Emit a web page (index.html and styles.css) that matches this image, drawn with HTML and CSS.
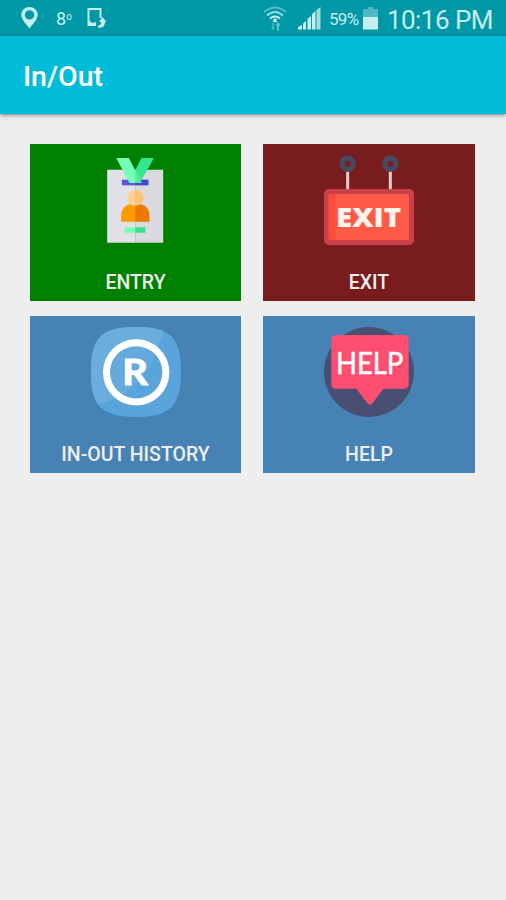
FILE: index.html
```html
<!DOCTYPE html>
<html lang="en">
<head>
<meta charset="utf-8">
<title>In/Out</title>
<link rel="stylesheet" href="styles.css">
</head>
<body>
<header class="status">
  <svg class="pin" viewBox="0 0 17 22"><path fill-rule="evenodd" d="M8.500 0C3.800 0 .3 3.400.3 7.800c0 4.800 4.800 9.200 8.200 13.700 3.400-4.500 8.200-8.900 8.200-13.700C16.700 3.400 13.200 0 8.500 0Zm0 3.200a4.700 4.700 0 1 1 0 9.400 4.700 4.700 0 0 1 0-9.400Z"/></svg>
  <span class="temp">8<span class="degree">o</span></span>
  <svg class="phone" viewBox="0 0 20 22"><path class="line" d="M13.500 11V2H1.500V18H9"/><path d="M1 14h2l2 2 4-1v2H6l3 2H1zM15.500 10l4 5H18c0 4-2.500 6.200-7 5.800v-2.300c2.500 0 3.200-1.500 3.200-3.500H12z"/></svg>
  <span class="spacer"></span>
  <svg class="wifi" viewBox="0 0 24 26"><g class="line"><path opacity=".45" d="M1 7q11-9 22 0"/><path opacity=".8" d="M4 10.500q8-7 16 0"/><path d="M7 13.500q5-4 10 0"/></g><circle cx="12" cy="15.500" r="2"/><path opacity=".5" d="M9.500 18v4H8l2.700 3.500V18zM14 25.500v-5h-1.500l2.500-3.500 3 3.500h-2v5z"/></svg>
  <svg class="signal" viewBox="0 0 23 23"><path d="M0 22.500V20l4-2v4.500zM5 22.500v-6l3-2.500v8.500zM9.500 22.500V12l3.500-3v13.500zM14 22.500V7l3.500-3v18.500z"/><path opacity=".8" d="M18.500 22.500V3L22.500 0v22.500z"/></svg>
  <span class="percent">59%</span>
  <svg class="battery" viewBox="0 0 15 23"><path opacity=".4" d="M5 0h5v2h5v8H0V2h5z"/><path d="M0 10h15v12.500H0z"/></svg>
  <span class="clock">10:16 PM</span>
</header>
<div class="toolbar"><h1>In/Out</h1></div>
<main class="grid">
  <section class="tile entry">
    <svg class="icon" viewBox="211.500 60 270 270">
      <path fill="#e1e1e7" d="M260 104h84v219h-84z"/><path fill="#d9d9df" d="M344 104h84v219h-84z"/>
      <path fill="#5a55e0" d="M304 134h40v17h-40z"/><path fill="#4348d2" d="M344 134h40v17h-40z"/>
      <path fill="#33e58d" d="M363 69h37l-20 37-20 32-16-32z"/><path fill="#73ffb4" d="M287 69h38l39 75h-37z"/><path fill="#5be79b" d="M344 106l20 38h-20z"/>
      <path fill="#ff9a00" d="M344 207h-14q-28 6-28 36v17h42z"/><path fill="#e97900" d="M344 207h15q28 6 28 36v17h-43z"/>
      <path fill="#ffd092" d="M344 165c-32 0-31 47 0 47z"/><path fill="#ffc078" d="M344 165c34 0 33 47 0 47z"/>
      <path fill="#73ffb4" d="M312 277h32v16h-32z"/><path fill="#33e58d" d="M344 277h31v16h-31z"/>
    </svg>
    <span class="label">ENTRY</span>
  </section>
  <section class="tile exit">
    <svg class="icon" viewBox="207 60 270 270">
      <path stroke="#e9c9cd" stroke-width="9" d="M278 108v57M406 108v57"/>
      <g fill="none" stroke="#46495f" stroke-width="16"><circle cx="278" cy="86" r="17"/><circle cx="406" cy="86" r="17"/></g>
      <rect x="207" y="162" width="270" height="168" rx="15" fill="#cb4149"/>
      <rect x="221" y="177" width="241" height="138" rx="5" fill="#ff5b48"/><path fill="#ff4b37" d="M226 177h15v138h-15q-5 0-5-5V182q0-5 5-5z"/>
      <text class="sign" x="243" y="275" textLength="196" lengthAdjust="spacingAndGlyphs">EXIT</text>
    </svg>
    <span class="label">EXIT</span>
  </section>
  <section class="tile">
    <svg class="icon" viewBox="211.500 57 270 270">
      <path fill="#5aa4dc" d="M346 57c104 0 135 29 135 135s-35 135-135 135-135-31-135-135S244 57 346 57z"/>
      <path fill="#6badde" d="M429 70C410 61 384 57 346 57c-102 0-135 31-135 135 0 43 6 73 20 95Q375 266 429 70z"/>
      <circle cx="347" cy="193" r="89" fill="#5aa4dc" fill-opacity=".4" stroke="#fff" stroke-width="21"/>
      <text class="registered" x="305" y="232" textLength="77" lengthAdjust="spacingAndGlyphs">R</text>
    </svg>
    <span class="label">IN-OUT HISTORY</span>
  </section>
  <section class="tile">
    <svg class="icon" viewBox="207 57 270 270">
      <circle cx="342" cy="192" r="135" fill="#484f73"/>
      <path fill="#ff4e70" d="M244 81h202q15 0 15 15v131q0 15-15 15h-61l-32 43q-8 11-16 0l-33-43h-60q-15 0-15-15V96q0-15 15-15z"/>
      <text class="bubble" x="243" y="198" textLength="202" lengthAdjust="spacingAndGlyphs">HELP</text>
    </svg>
    <span class="label">HELP</span>
  </section>
</main>
</body>
</html>
```
FILE: styles.css
```css
* { box-sizing: border-box; }
body {
  margin: 0;
  min-height: 900px;
  background: #eee;
  font-family: Roboto, sans-serif;
}
.status {
  display: flex;
  align-items: flex-start;
  height: 36px;
  padding: 7px 15px 0 21px;
  background: #0097a7;
  color: #c5eeee;
}
.status svg { flex: none; fill: #c5eeee; }
.status .line { fill: none; stroke: #c5eeee; stroke-width: 2; }
.pin { width: 17px; height: 22px; }
.temp { width: 31px; padding-left: 18px; margin-top: -1px; font-size: 18px; line-height: 21px; white-space: nowrap; }
.degree { font-size: 10px; vertical-align: 5px; }
.phone { width: 20px; height: 22px; margin-left: 18px; }
.spacer { flex: 1; }
.wifi { width: 24px; height: 26px; margin-top: -2px; margin-right: 11px; }
.signal { width: 23px; height: 23px; margin-right: 8px; }
.percent { width: 31px; margin-top: 2px; font-size: 17px; line-height: 20px; letter-spacing: -0.7px; }
.battery { width: 15px; height: 23px; margin-left: 3px; margin-right: 9px; }
.clock { width: 104px; margin-top: -2px; font-size: 26px; line-height: 30px; letter-spacing: -0.55px; white-space: nowrap; }
.toolbar {
  display: flex;
  align-items: center;
  height: 78px;
  padding-left: 23px;
  background: #00bcd9;
  box-shadow: 0 1px 4px rgba(0, 0, 0, .5);
}
h1 { margin: 4px 0 0; color: #fff; font-size: 28.5px; font-weight: 500; line-height: 34px; }
.grid {
  display: grid;
  grid-template-columns: 211px 212px;
  grid-auto-rows: 157px;
  gap: 15px 22px;
  padding: 30px 0 0 30px;
}
.tile {
  display: flex;
  flex-direction: column;
  align-items: center;
  padding-top: 11px;
  background: #4682b4;
}
.entry { background: #008000; }
.exit { background: #791c1e; }
.icon { width: 90px; height: 90px; }
.label { margin-top: 26px; color: #eee; font-size: 19.5px; font-weight: 500; line-height: 24px; white-space: nowrap; }
.sign { fill: #fff3ee; font: 800 77px "Open Sans", sans-serif; }
.registered { fill: #fff; stroke: #fff; stroke-width: 3; font: 700 108px Lato, sans-serif; }
.bubble { fill: #fff; font: 400 92px Lato, sans-serif; stroke: #fff; stroke-width: 1.5; }
```
